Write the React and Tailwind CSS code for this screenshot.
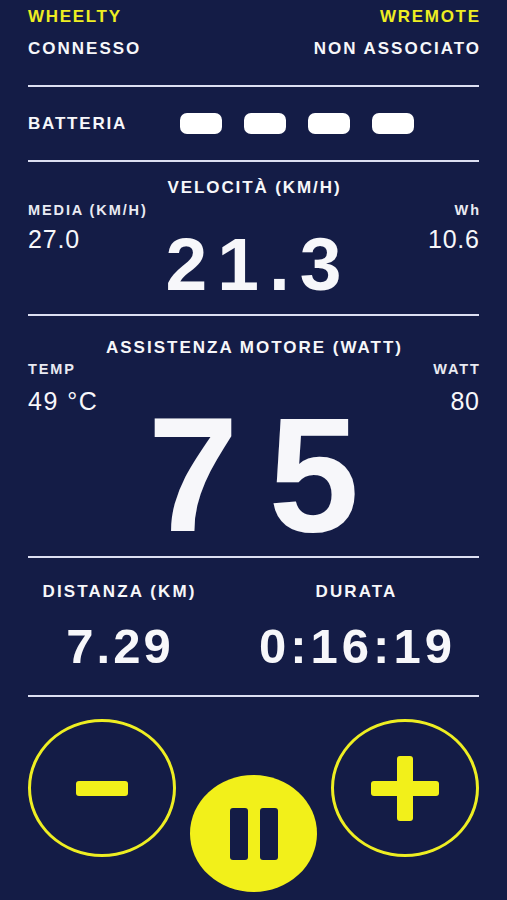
import React from "react";

const F = { fontFamily: '"Liberation Sans", Arial, sans-serif' };

function Line() {
  return <div className="h-[2px] w-full bg-[#dcdff2]" />;
}

export default function App() {
  return (
    <div
      className="w-[507px] h-[900px] overflow-hidden bg-[#141c46] px-[28px] text-[#f7f7fa] flex flex-col"
      style={F}
    >
      {/* header */}
      <div className="mt-[8px] flex justify-between text-[17px] leading-none font-bold tracking-[1.7px] text-[#eeee22]">
        <span>WHEELTY</span>
        <span className="-mr-[1.7px]">WREMOTE</span>
      </div>
      <div className="mt-[15px] flex justify-between text-[17px] leading-none font-bold tracking-[2px]">
        <span>CONNESSO</span>
        <span className="-mr-[2px]">NON ASSOCIATO</span>
      </div>
      <div className="mt-[28px]">
        <Line />
      </div>

      {/* battery */}
      <div className="mt-[26px] h-[21px] flex items-center">
        <span className="w-[152px] text-[17px] leading-none font-bold tracking-[1.8px]">BATTERIA</span>
        <div className="flex gap-[22px]">
          <div className="w-[42px] h-[21px] rounded-[7px] bg-white" />
          <div className="w-[42px] h-[21px] rounded-[7px] bg-white" />
          <div className="w-[42px] h-[21px] rounded-[7px] bg-white" />
          <div className="w-[42px] h-[21px] rounded-[7px] bg-white" />
        </div>
      </div>
      <div className="mt-[26px]">
        <Line />
      </div>

      {/* speed */}
      <div className="mt-[17px] pl-[2px] text-center text-[17px] leading-none font-bold tracking-[1.9px]">
        VELOCITÀ (KM/H)
      </div>
      <div className="mt-[7px] grid grid-cols-[1fr_auto_1fr] items-start">
        <div className="flex flex-col items-start">
          <span className="text-[14.5px] leading-none font-bold tracking-[1.9px] text-[#e9eaf2] whitespace-nowrap">MEDIA (KM/H)</span>
          <span className="mt-[9px] text-[25px] leading-none tracking-[0.8px]">27.0</span>
        </div>
        <div className="mt-[24px] pl-[10px] text-[75px] leading-none font-bold tracking-[10px]">21.3</div>
        <div className="flex flex-col items-end">
          <span className="text-[14.5px] leading-none font-bold tracking-[1.9px] -mr-[1.9px] text-[#e9eaf2]">Wh</span>
          <span className="mt-[9px] text-[25px] leading-none tracking-[0.8px] -mr-[0.8px]">10.6</span>
        </div>
      </div>
      <div className="mt-[12px]">
        <Line />
      </div>

      {/* motor */}
      <div className="mt-[23px] pl-[2px] text-center text-[17px] leading-none font-bold tracking-[2px]">
        ASSISTENZA MOTORE (WATT)
      </div>
      <div className="mt-[6px] grid grid-cols-[1fr_auto_1fr] items-start">
        <div className="flex flex-col items-start">
          <span className="text-[14.5px] leading-none font-bold tracking-[1.9px] text-[#e9eaf2]">TEMP</span>
          <span className="mt-[12px] text-[25px] leading-none tracking-[1.5px] whitespace-nowrap">49 °C</span>
        </div>
        <div className="mt-[31px] pl-[30px] text-[163px] leading-none font-bold tracking-[30px]">75</div>
        <div className="flex flex-col items-end">
          <span className="text-[14.5px] leading-none font-bold tracking-[1.9px] -mr-[1.9px] text-[#e9eaf2]">WATT</span>
          <span className="mt-[12px] text-[25px] leading-none tracking-[0.8px] -mr-[0.8px]">80</span>
        </div>
      </div>
      <div className="mt-0">
        <Line />
      </div>

      {/* stats */}
      <div className="-ml-[28px] w-[474px] mt-[25px] grid grid-cols-2">
        <div className="flex flex-col items-center">
          <span className="pl-[2px] text-[17px] leading-none font-bold tracking-[2.1px]">DISTANZA (KM)</span>
          <span className="mt-[22px] pl-[3px] text-[49px] leading-none font-bold tracking-[3px]">7.29</span>
        </div>
        <div className="flex flex-col items-center">
          <span className="pl-[2px] text-[17px] leading-none font-bold tracking-[2.1px]">DURATA</span>
          <span className="mt-[22px] pl-[4px] text-[49px] leading-none font-bold tracking-[4px]">0:16:19</span>
        </div>
      </div>
      <div className="mt-[24px]">
        <Line />
      </div>

      {/* controls */}
      <div className="mt-[22px] flex justify-between items-start">
        <button className="w-[148px] h-[138px] rounded-[50%] border-[3px] border-[#eeee22] flex items-center justify-center">
          <div className="w-[52px] h-[15px] rounded-[3px] bg-[#f2f01a]" />
        </button>
        <button className="mt-[56px] w-[127px] h-[117px] rounded-[50%] bg-[#f2f01a] flex items-center justify-center gap-[12px]">
          <div className="w-[18px] h-[52px] rounded-[3px] bg-[#141c46]" />
          <div className="w-[18px] h-[52px] rounded-[3px] bg-[#141c46]" />
        </button>
        <button className="w-[148px] h-[138px] rounded-[50%] border-[3px] border-[#eeee22] flex items-center justify-center">
          <div className="relative w-[68px] h-[65px]">
            <div className="absolute left-0 top-[25px] w-[68px] h-[15px] rounded-[3px] bg-[#f2f01a]" />
            <div className="absolute left-[26px] top-0 w-[16px] h-[65px] rounded-[3px] bg-[#f2f01a]" />
          </div>
        </button>
      </div>
    </div>
  );
}
